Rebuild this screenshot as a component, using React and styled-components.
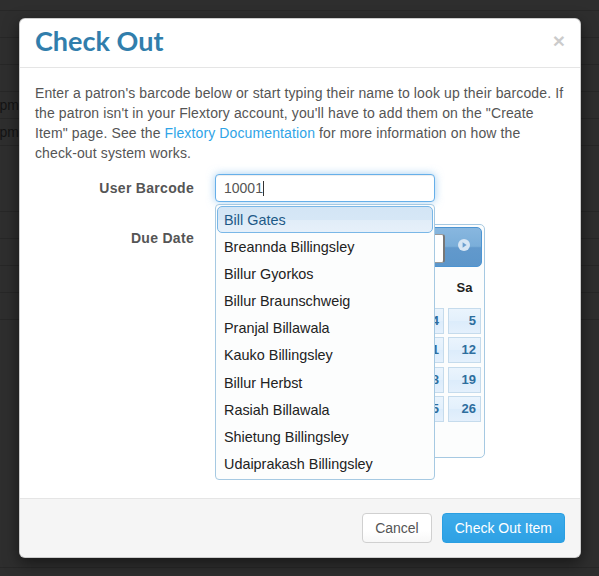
import React from "react";
import styled, { createGlobalStyle } from "styled-components";

const Global = createGlobalStyle`
  html, body { margin: 0; padding: 0; }
  body { background: #2e2e2e; font-family: "Liberation Sans", Arial, sans-serif; }
  *, *::before, *::after { box-sizing: border-box; }
`;

const Screen = styled.div`
  position: relative;
  width: 599px;
  height: 576px;
  overflow: hidden;
  background: #2e2e2e;
`;

const BgRow = styled.div`
  height: ${(p) => p.$h}px;
  border-bottom: 1px solid #272727;
  display: flex;
  align-items: center;
`;

const BgCell = styled.div`
  width: 19px;
  overflow: hidden;
  display: flex;
  justify-content: flex-end;
  white-space: nowrap;
  font-size: 14px;
  color: #141414;
`;

const Modal = styled.div`
  position: absolute;
  top: 18px;
  left: 19px;
  width: 562px;
  background: #fff;
  border: 1px solid rgba(0, 0, 0, 0.2);
  border-radius: 6px;
  box-shadow: 0 5px 15px rgba(0, 0, 0, 0.5);
`;

const Header = styled.div`
  display: flex;
  align-items: center;
  justify-content: space-between;
  padding: 7px 15px 11px;
  border-bottom: 1px solid #e5e5e5;
`;

const Title = styled.h4`
  margin: 0;
  font-family: Lato, "Open Sans", sans-serif;
  font-weight: 700;
  font-size: 27px;
  line-height: 30px;
  color: #317eac;
`;

const Close = styled.button`
  border: 0;
  background: none;
  padding: 0;
  margin-top: -2px;
  font-family: "Liberation Sans", Arial, sans-serif;
  font-weight: bold;
  font-size: 21px;
  line-height: 1;
  color: #000;
  opacity: 0.2;
`;

const Body = styled.div`
  padding: 15px 15px 40px;
`;

const Intro = styled.p`
  margin: 0 0 11px;
  font-size: 14px;
  line-height: 20px;
  letter-spacing: 0.12px;
  color: #555;
`;

const DocLink = styled.a`
  color: #2fa4e7;
  text-decoration: none;
`;

const Form = styled.div`
  display: grid;
  grid-template-columns: 159px auto;
  column-gap: 21px;
  row-gap: 22px;
  align-items: start;
  justify-content: start;
`;

const Label = styled.label`
  text-align: right;
  font-weight: bold;
  font-size: 14px;
  line-height: 20px;
  padding-top: 4px;
  color: #555;
  letter-spacing: 0.3px;
`;

const Field = styled.div`
  position: relative;
  width: ${(p) => p.$w}px;
`;

const BarcodeInput = styled.div`
  width: 220px;
  height: 28px;
  border: 1px solid #66afe9;
  border-radius: 4px;
  box-shadow: inset 0 1px 1px rgba(0, 0, 0, 0.075), 0 0 8px rgba(102, 175, 233, 0.6);
  padding: 0 8px;
  font-size: 14px;
  line-height: 20px;
  color: #555;
  display: flex;
  align-items: center;
  background: #fff;
`;

const Caret = styled.span`
  display: inline-block;
  width: 1px;
  height: 15px;
  background: #333;
`;

const Menu = styled.ul`
  position: absolute;
  top: 30px;
  left: 0;
  width: 220px;
  margin: 0;
  padding: 1px 1px 2px;
  list-style: none;
  background: #fcfdfd;
  border: 1px solid #a6c9e2;
  border-radius: 4px;
  z-index: 10;
  font-family: "Liberation Sans", Arial, sans-serif;
  font-size: 14.4px;
`;

const MenuItem = styled.li`
  height: 27.1px;
  padding: 2px 6px 0;
  line-height: 23px;
  white-space: nowrap;
  border: 1px solid ${(p) => (p.$active ? "#79b7e7" : "transparent")};
  border-radius: 5px;
  color: ${(p) => (p.$active ? "#1d5987" : "#222")};
  background: ${(p) =>
    p.$active
      ? "linear-gradient(#d3e5f5 0%, #d6e7f6 50%, #e1edf8 52%, #e6f0fa 100%)"
      : "transparent"};
`;

const DatePicker = styled.div`
  width: 270px;
  height: 234px;
  border: 1px solid #a6c9e2;
  border-radius: 5px;
  background: #fcfdfd;
  padding: 2px;
  font-family: "Liberation Sans", Arial, sans-serif;
`;

const DPHeader = styled.div`
  height: 40px;
  border: 1px solid #4c94d2;
  border-radius: 5px;
  background: linear-gradient(#88b7df 0%, #7aaed9 48%, #6299cc 52%, #5c96ca 100%);
  display: grid;
  grid-template-columns: 34px 1fr 34px;
  align-items: center;
`;

const NavIcon = styled.span`
  display: flex;
  justify-content: center;
  margin-bottom: 5px;
`;

const Selects = styled.div`
  display: flex;
  gap: 4px;
  justify-content: flex-end;
  padding-right: 2px;
  margin-top: 2px;
`;

const FakeSelect = styled.div`
  width: 92px;
  height: 29px;
  background: #fff;
  border: 1px solid #9a9a9a;
  border-right: 2px solid #777;
  border-radius: 3px;
  font-size: 12px;
  line-height: 27px;
  padding-left: 4px;
  color: #222;
`;

const DayNames = styled.div`
  display: grid;
  grid-template-columns: repeat(7, 33px);
  column-gap: 4px;
  justify-content: end;
  padding-right: 1px;
  height: 41px;
  align-items: center;
`;

const DayName = styled.span`
  text-align: center;
  font-weight: bold;
  font-size: 13px;
  color: #222;
`;

const Days = styled.div`
  display: grid;
  grid-template-columns: repeat(7, 33px);
  grid-auto-rows: 26px;
  column-gap: 4px;
  row-gap: 3.33px;
  justify-content: end;
  padding-right: 1px;
`;

const Day = styled.a`
  display: block;
  border: 1px solid #c5dbec;
  background: linear-gradient(#eaf4fd 0%, #e3f0fc 48%, #dcecfb 52%, #e4f0fc 100%);
  color: #2e6e9e;
  font-weight: bold;
  font-size: 13px;
  line-height: 24px;
  text-align: right;
  padding-right: 4px;
  text-decoration: none;
`;

const Footer = styled.div`
  display: flex;
  justify-content: flex-end;
  gap: 10px;
  padding: 14px 15px;
  border-top: 1px solid #e5e5e5;
  background: #f5f5f5;
  border-radius: 0 0 6px 6px;
`;

const Button = styled.button`
  height: 30px;
  padding: 0 12px;
  border-radius: 4px;
  font-family: "Liberation Sans", Arial, sans-serif;
  font-size: 14px;
  border: 1px solid ${(p) => (p.$primary ? "#2a9fe2" : "#d0d0d0")};
  color: ${(p) => (p.$primary ? "#fff" : "#555")};
  background: ${(p) =>
    p.$primary
      ? "linear-gradient(#3eabe9, #33a5e7 60%, #2ea1e4)"
      : "linear-gradient(#fff, #fff 60%, #f7f7f7)"};
`;

const Arrow = ({ dir }) => (
  <svg width="12" height="12" viewBox="0 0 12 12">
    <circle cx="6" cy="6" r="6" fill="#d7e6f4" />
    {dir === "next" ? (
      <path d="M4.6 3.2 L4.6 8.8 L8.6 6 Z" fill="#6c9fcf" />
    ) : (
      <path d="M7.4 3.2 L7.4 8.8 L3.4 6 Z" fill="#6c9fcf" />
    )}
  </svg>
);

const rows = [11, 27, 27, 27, 27, 27, 66, 27, 27, 27, 27, 248];
const names = [
  "Bill Gates",
  "Breannda Billingsley",
  "Billur Gyorkos",
  "Billur Braunschweig",
  "Pranjal Billawala",
  "Kauko Billingsley",
  "Billur Herbst",
  "Rasiah Billawala",
  "Shietung Billingsley",
  "Udaiprakash Billingsley",
];
const dayNames = ["Su", "Mo", "Tu", "We", "Th", "Fr", "Sa"];
const cells = [null, null, 1, 2, 3, 4, 5];
for (let d = 6; d <= 26; d++) cells.push(d);

export default function App() {
  return (
    <Screen>
      <Global />
      {rows.map((h, i) => (
        <BgRow key={i} $h={h}>
          {(i === 4 || i === 5) && <BgCell>{i === 4 ? "4:00 pm" : "5:30 pm"}</BgCell>}
        </BgRow>
      ))}
      <Modal>
        <Header>
          <Title>Check Out</Title>
          <Close>×</Close>
        </Header>
        <Body>
          <Intro>
            Enter a patron's barcode below or start typing their name to look up their barcode. If
            the patron isn't in your Flextory account, you'll have to add them on the "Create
            Item" page. See the <DocLink href="#">Flextory Documentation</DocLink> for more
            information on how the check-out system works.
          </Intro>
          <Form>
            <Label>User Barcode</Label>
            <Field $w={220}>
              <BarcodeInput>
                10001
                <Caret />
              </BarcodeInput>
              <Menu>
                {names.map((n, i) => (
                  <MenuItem key={n} $active={i === 0}>
                    {n}
                  </MenuItem>
                ))}
              </Menu>
            </Field>
            <Label>Due Date</Label>
            <Field $w={270}>
              <DatePicker>
                <DPHeader>
                  <NavIcon>
                    <Arrow dir="prev" />
                  </NavIcon>
                  <Selects>
                    <FakeSelect>Jul</FakeSelect>
                    <FakeSelect>2014</FakeSelect>
                  </Selects>
                  <NavIcon>
                    <Arrow dir="next" />
                  </NavIcon>
                </DPHeader>
                <DayNames>
                  {dayNames.map((d) => (
                    <DayName key={d}>{d}</DayName>
                  ))}
                </DayNames>
                <Days>
                  {cells.map((c, i) => (c ? <Day key={i}>{c}</Day> : <span key={i} />))}
                </Days>
              </DatePicker>
            </Field>
          </Form>
        </Body>
        <Footer>
          <Button>Cancel</Button>
          <Button $primary>Check Out Item</Button>
        </Footer>
      </Modal>
    </Screen>
  );
}
